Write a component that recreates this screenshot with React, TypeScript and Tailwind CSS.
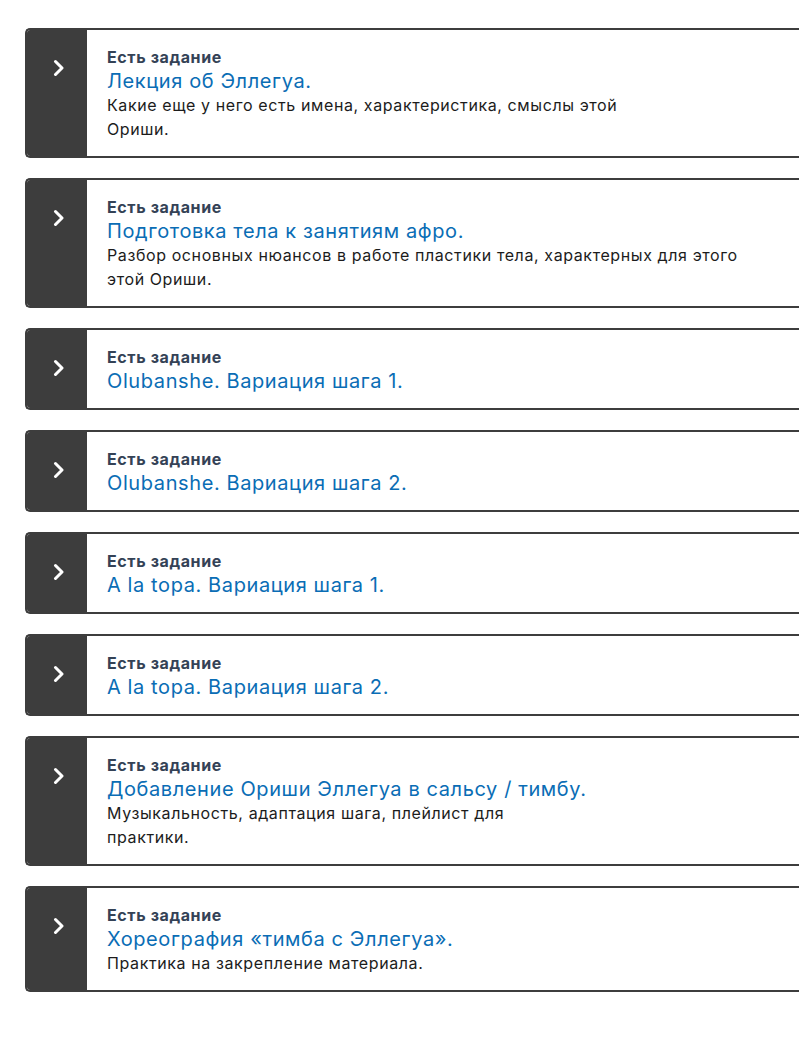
const TASKS = [
  {
    title: 'Лекция об Эллегуа.',
    desc: ['Какие еще у него есть имена, характеристика, смыслы этой', 'Ориши.'],
  },
  {
    title: 'Подготовка тела к занятиям афро.',
    desc: ['Разбор основных нюансов в работе пластики тела, характерных для этого', 'этой Ориши.'],
  },
  { title: 'Olubanshe. Вариация шага 1.', desc: [] },
  { title: 'Olubanshe. Вариация шага 2.', desc: [] },
  { title: 'A la topa. Вариация шага 1.', desc: [] },
  { title: 'A la topa. Вариация шага 2.', desc: [] },
  {
    title: 'Добавление Ориши Эллегуа в сальсу / тимбу.',
    desc: ['Музыкальность, адаптация шага, плейлист для', 'практики.'],
  },
  {
    title: 'Хореография «тимба с Эллегуа».',
    desc: ['Практика на закрепление материала.'],
  },
];

function Chevron() {
  return (
    <svg className="w-[12px] h-[18px] text-white" viewBox="0 0 12 18" fill="none">
      <path d="M3.5 2.5l6.5 6.5-6.5 6.5" stroke="currentColor" strokeWidth="3" strokeLinecap="round" strokeLinejoin="round" />
    </svg>
  );
}

export default function App() {
  return (
    <div
      className="min-h-[1037px] bg-white overflow-hidden pt-[28px] pl-[25px]"
      style={{ fontFamily: 'Inter, "Noto Sans", sans-serif' }}
    >
      <div className="flex flex-col gap-[20px]">
        {TASKS.map((t) => (
          <div
            key={t.title}
            className="flex w-[800px] bg-white border-y-2 border-l-2 border-[#3d3d3d] rounded-l-[5px] overflow-hidden"
          >
            {/* Toggle column */}
            <div className="w-[60px] shrink-0 bg-[#3d3d3d] flex justify-center pt-[29px] pl-[1px]">
              <Chevron />
            </div>

            {/* Content */}
            <div className="pl-[20px] pt-[15px] pb-[15px] text-[16px] leading-[24px] tracking-[0.6px]">
              <div className="font-bold text-[#344256] text-[16px]">Есть задание</div>
              <div className="text-[20px] text-[#0a6db5]">{t.title}</div>
              {t.desc.map((d) => (
                <div key={d} className="text-[#1c1c1c]">
                  {d}
                </div>
              ))}
            </div>
          </div>
        ))}
      </div>
    </div>
  );
}
